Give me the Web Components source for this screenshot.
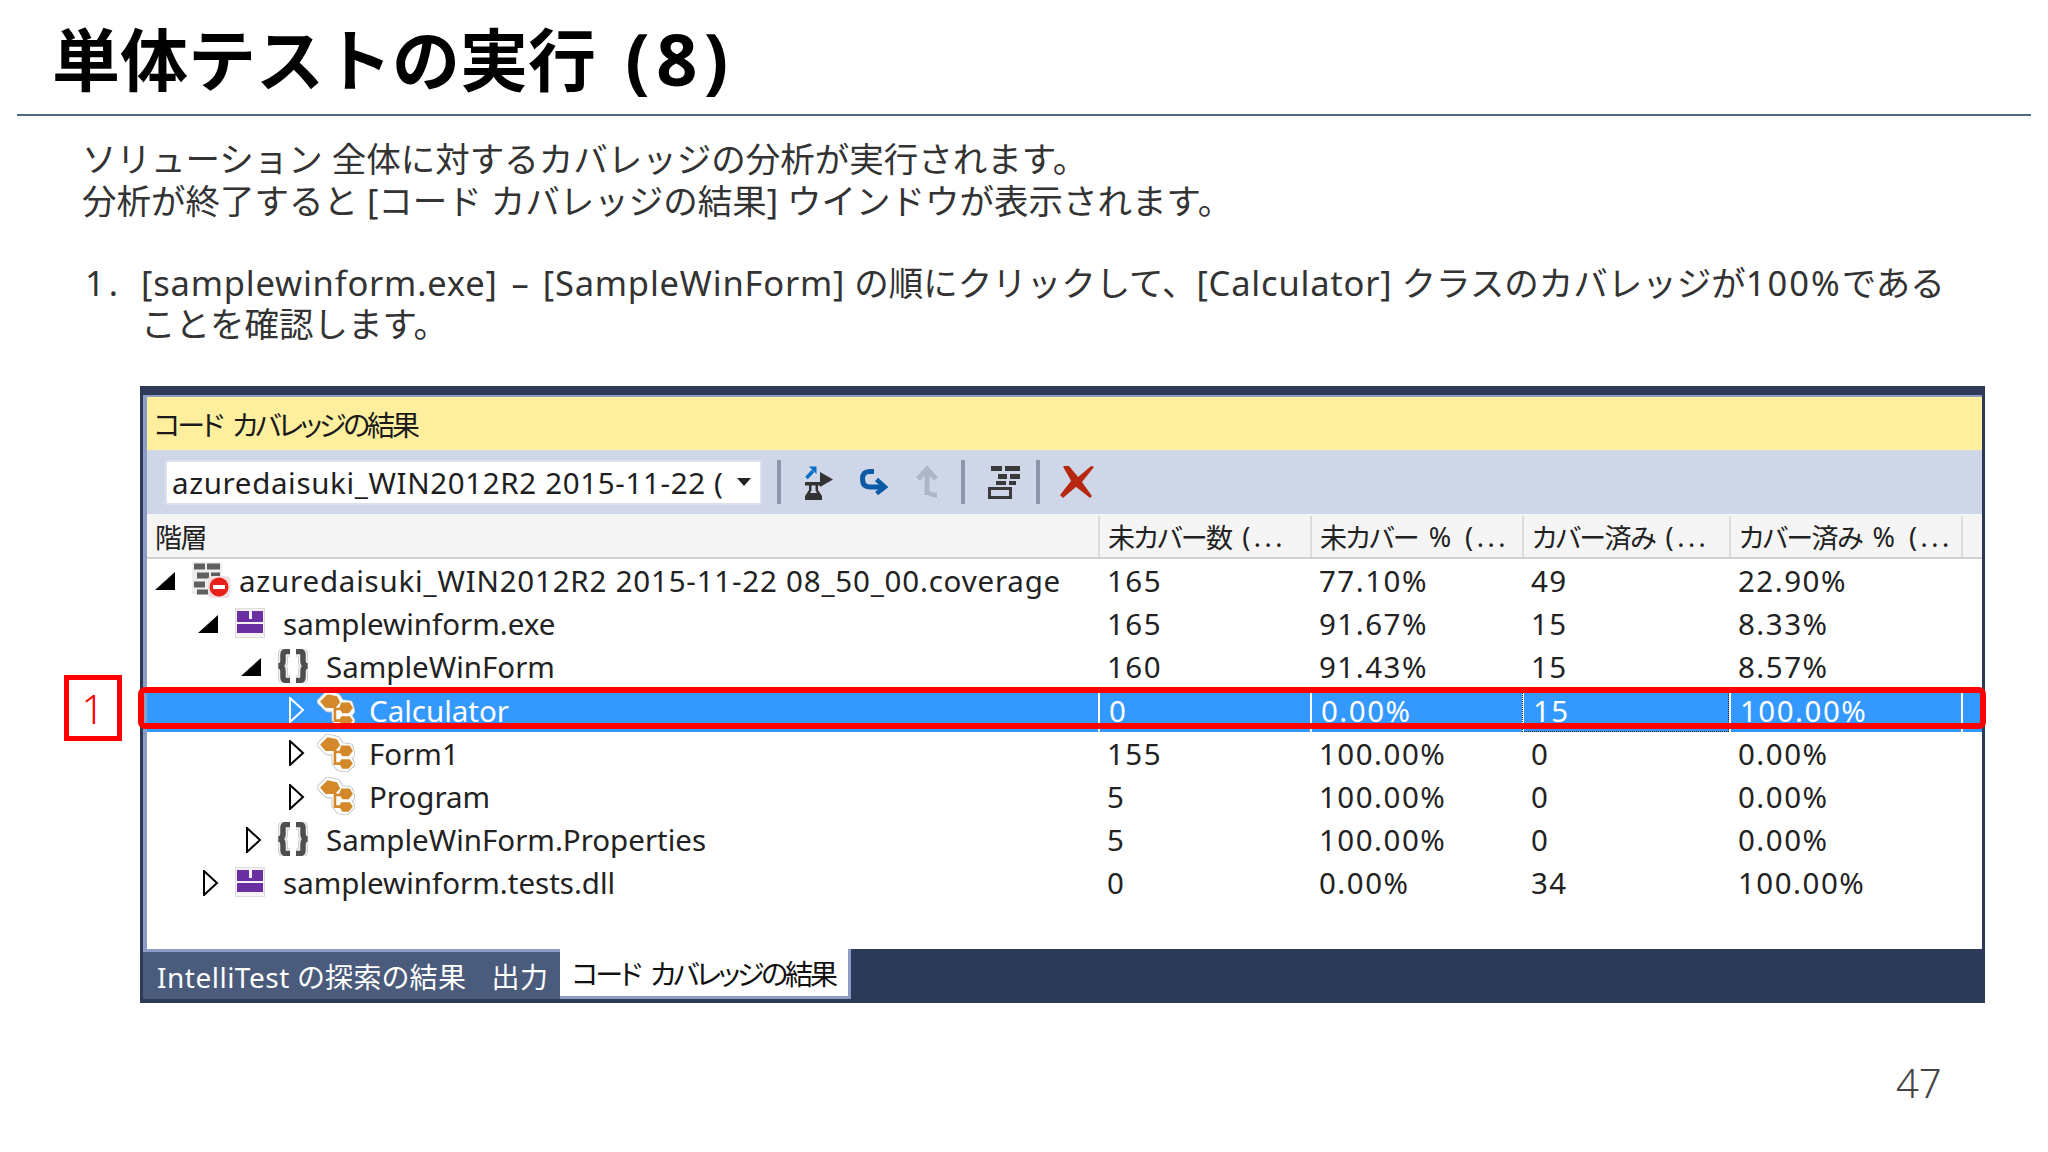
<!DOCTYPE html>
<html lang="ja"><head><meta charset="utf-8"><style>
html,body{margin:0;background:#fff}
body{width:2048px;height:1152px;overflow:hidden;font-family:"Noto Sans","Noto Sans CJK JP",sans-serif}
.l{letter-spacing:.8px}
.w{letter-spacing:2px}
.d{margin:0 5px}
</style></head><body>
<slide-page>
<slide-title>単体テストの実行<span style="font-size:72px;letter-spacing:6.5px;margin-left:4px"> (8)</span></slide-title>
<slide-text>
<p>ソリューション 全体に対するカバレッジの分析が実行されます。<br>分析が終了すると [コード カバレッジの結果] ウインドウが表示されます。</p>
<num-item n="1."><span class="l">[samplewinform.exe]</span> <span class="d">–</span> <span class="l">[SampleWinForm]</span> の順にクリックして、<span class="l">[Calculator]</span> クラスのカバレッジが<span class="w">100%</span>である<br>ことを確認します。</num-item>
</slide-text>
<coverage-window></coverage-window>
<page-no>47</page-no>
</slide-page>
<script>
const FONT='"Noto Sans","Noto Sans CJK JP",sans-serif';
function def(name,css,html){
  customElements.define(name,class extends HTMLElement{
    connectedCallback(){
      if(this.shadowRoot)return;
      const r=this.attachShadow({mode:'open'});
      r.innerHTML='<style>'+css+'</style>'+(typeof html==='function'?html(this):html);
    }
  });
}
def('slide-page',':host{display:block;width:2048px;height:1152px;position:relative}','<slot></slot>');
def('slide-title',`:host{display:block;margin-left:17px;width:2014px;height:116px;box-sizing:border-box;padding:15px 0 0 35px;border-bottom:2px solid #4d6785;
font:700 68px/86px ${FONT};color:#000}`,'<slot></slot>');
def('slide-text',`:host{display:block;padding:22px 0 0 82px;font:400 34.5px/41.5px ${FONT};color:#333}
::slotted(p){margin:0 0 41px 0}`,'<slot></slot>');
def('num-item',`:host{display:grid;grid-template-columns:59px 1fr;line-height:41px}.n{padding-left:3px;letter-spacing:4px}`,h=>`<div class="n">${h.getAttribute('n')}</div><div><slot></slot></div>`);
const BR="M15 2.5H11Q8 2.5 8 6V12Q8 16 4 17Q8 18 8 22V28Q8 31.5 11 31.5H15M21 2.5H25Q28 2.5 28 6V12Q28 16 32 17Q28 18 28 22V28Q28 31.5 25 31.5H21";
const CL="M3 10L10 3L19 5L23 11L31 12L33 19L30 23L33 28L28 33L21 32L17 27L17 17L10 17Z";
const ICON={
 cover:`<svg width="38" height="36" viewBox="0 0 38 36"><rect x="0" y="0" width="30" height="32" fill="#eee"/><path d="M2 1.5h11v6H2zM15 1.5h13v6H15zM5 10.5h12v6H5zM19 10.5h9v6H19zM2 19.5h11v6H2zM5 27.5h12v5H5z" fill="#5f5f5f"/><rect x="16" y="14" width="22" height="22" rx="4" fill="#f2dede"/><circle cx="27" cy="25" r="9.5" fill="#e8201a"/><rect x="21" y="23" width="12" height="4" fill="#fff"/></svg>`,
 mod:`<svg width="30" height="30" viewBox="0 0 30 30"><rect x=".5" y=".5" width="29" height="29" fill="#f6f3f8" stroke="#ddd"/><path d="M2 3h12v11H2zM17 3h11v11H17zM2 16h26v9H2z" fill="#6a2fa0"/><path d="M14 11h3v3h-3z" fill="#6a2fa0"/></svg>`,
 ns:`<svg width="36" height="34" viewBox="0 0 36 34"><g fill="none"><path d="${BR}" stroke="#c4c4c4" stroke-width="10"/><path d="${BR}" stroke="#f2f2f2" stroke-width="8.5"/><path d="${BR}" stroke="#4e4e4e" stroke-width="5.5"/></g></svg>`,
 cls:`<svg width="38" height="38" viewBox="0 0 36 36"><path d="${CL}" fill="#bbb" stroke="#bbb" stroke-width="6.5" stroke-linejoin="round"/><path d="${CL}" fill="#fff" stroke="#fff" stroke-width="5" stroke-linejoin="round"/><path d="M3 10L10 3L19 5L22 11L17 16L8 16Z" fill="#d3882a"/><path d="M23 11L31 11L34 16L30 21L24 21L21 16Z" fill="#d3882a"/><path d="M23 24L31 24L34 28L30 33L24 33L21 28Z" fill="#d3882a"/><path d="M17 14V28H23M17 17H24" fill="none" stroke="#d3882a" stroke-width="2.5"/></svg>`,
 flask:`<svg width="28" height="35" viewBox="0 0 28 35"><path d="M1.5 13L8 6" stroke="#0a6fc2" stroke-width="3.5" fill="none"/><path d="M4 1.5H11.5V9Z" fill="#0a6fc2"/><path d="M15 7V22L28 14.5Z" fill="#333"/><path d="M0 17H17V20.5H13V25L17 31V35H0V31L4 25V20.5H0Z" fill="#333"/><path d="M6.5 20.5H10.5V25.5L12 28H5L6.5 25.5Z" fill="#cfd6e8"/></svg>`,
 redo:`<svg width="28" height="26" viewBox="0 0 28 26"><path d="M14 2.5H9.5Q2.5 2.5 2.5 10Q2.5 18 10 18H24" fill="none" stroke="#0b5aa5" stroke-width="5"/><path d="M16.5 10.5L25 18L16.5 24.5" fill="none" stroke="#0b5aa5" stroke-width="4.5"/></svg>`,
 up:`<svg width="26" height="34" viewBox="0 0 26 34"><path d="M12 30V5M3 14L12 4L21 14M12 26Q14 30 22 30" fill="none" stroke="#aeb6c6" stroke-width="5"/></svg>`,
 stack:`<svg width="34" height="34" viewBox="0 0 34 34"><path d="M3 1H14V6H3zM17 1H32V6H17zM10 9H19V14H10zM22 9H32V14H22zM8 16H18V20H8zM21 16H28V20H21z" fill="#3a3a3a"/><rect x="1.5" y="23.5" width="21" height="9" fill="none" stroke="#3a3a3a" stroke-width="3"/></svg>`,
 x:`<svg width="34" height="32" viewBox="0 0 34 32"><path d="M4 1L8 0L18 12L31 1L33 1L21 16L31 30L30 31L16 20L3 31L1 29L12 15Z" fill="#b5280f" stroke="#b5280f" stroke-width="1.5" stroke-linejoin="round"/></svg>`
};
def('tool-sep',':host{display:block;width:4px;height:44px;background:#8c95a9}','');
const S=t=>`<span style="letter-spacing:3.5px;white-space:pre"> ${t}</span>`;
def('coverage-window',`:host{display:block;position:relative;margin:42px 0 0 140px;width:1845px;height:617px;box-sizing:border-box;background:#2c3a58;padding-top:9px;padding-left:3px;padding-right:3px;font-family:${FONT}}
.frame{display:flex;flex-direction:column;height:100%;box-sizing:border-box}
.top{border-top:2px solid #8d9cc4;border-left:4px solid #8d9cc4;flex:1;display:flex;flex-direction:column;background:#fff;min-height:0}
.cap{height:53px;flex:none;background:#fdef9d;display:flex;align-items:center;padding-left:7px;font-size:28px;color:#1a1a1a;letter-spacing:-3.1px;word-spacing:7px;font-feature-settings:"palt"}
.bar{height:64px;flex:none;background:#cfd6e8;display:flex;align-items:center;padding-left:18px;box-sizing:border-box}
.combo{width:597px;height:45px;box-sizing:border-box;background:#fff;border:2px solid #dbe0ec;display:flex;align-items:center;padding-left:5px;font-size:29.5px;letter-spacing:.65px;color:#1e1e1e;white-space:nowrap}
.combo span{flex:1}
.combo i{display:block;width:0;height:0;border:7px solid transparent;border-top:8px solid #222;border-bottom:0;margin:0 9px 0 0}
.tools{display:flex;align-items:center;margin-left:15px}
.tools span{display:flex}
.head{height:45px;padding-top:2px;flex:none;box-sizing:border-box;background:#f5f5f5;border-bottom:2px solid #d0d0d0;display:grid;grid-template-columns:951px 212px 212px 207px 232px 1fr;font-size:27px;color:#222;letter-spacing:-1.5px;font-feature-settings:"palt"}
.head div{display:flex;align-items:center;padding-left:8px;border-left:2px solid #dcdcdc;box-sizing:border-box;white-space:nowrap}
.head div:first-child{border-left:0}
.rows{flex:1;min-height:0}
.tabs{height:54px;display:flex;flex:none;box-sizing:border-box;color:#fff;font-size:28px;letter-spacing:.5px;font-feature-settings:"palt"}
.tabs .idle{width:417px;box-sizing:border-box;background:#4a5b7c;border-top:3px solid #8d9cc4;margin-bottom:4px;display:flex;gap:25px;align-items:center;padding-left:14px;white-space:nowrap}
.tabs .on{width:291px;box-sizing:border-box;background:#fff;color:#111;border-bottom:3px solid #8d9cc4;margin-bottom:4px;border-right:3px solid #8d9cc4;display:flex;align-items:center;padding-left:12px;letter-spacing:-3.1px;word-spacing:7px;white-space:nowrap}
.hl{position:absolute;left:-2px;top:301px;width:1848px;height:42px;box-sizing:border-box;border:6px solid #f00;border-radius:7px;pointer-events:none}
.mark{position:absolute;left:-76px;top:289px;width:58px;height:66px;box-sizing:border-box;border:5px solid #f00;color:#f00;font-size:40px;font-weight:300;display:flex;align-items:center;justify-content:center}`,
`<div class="frame"><div class="top">
<div class="cap">コード カバレッジの結果</div>
<div class="bar"><div class="combo"><span>azuredaisuki_WIN2012R2 2015-11-22 (</span><i></i></div>
<div class="tools"><tool-sep></tool-sep><span style="margin:0 27px 0 24px">${ICON.flask}</span><span style="margin-right:27px">${ICON.redo}</span><span style="margin-right:20px">${ICON.up}</span><tool-sep></tool-sep><span style="margin:0 14px 0 23px">${ICON.stack}</span><tool-sep></tool-sep><span style="margin-left:20px">${ICON.x}</span></div></div>
<div class="head"><div>階層</div><div>未カバー数${S('(...')}</div><div>未カバー${S('% (...')}</div><div>カバー済み${S('(...')}</div><div>カバー済み${S('% (...')}</div><div></div></div>
<div class="rows">
<tree-row level="0" state="open" icon="cover" ls=".8" name="azuredaisuki_WIN2012R2 2015-11-22 08_50_00.coverage" a="165" b="77.10%" c="49" d="22.90%"></tree-row>
<tree-row level="1" state="open" icon="mod" name="samplewinform.exe" a="165" b="91.67%" c="15" d="8.33%"></tree-row>
<tree-row level="2" state="open" icon="ns" name="SampleWinForm" a="160" b="91.43%" c="15" d="8.57%"></tree-row>
<tree-row level="3" state="closed" icon="cls" name="Calculator" a="0" b="0.00%" c="15" d="100.00%" selected></tree-row>
<tree-row level="3" state="closed" icon="cls" name="Form1" a="155" b="100.00%" c="0" d="0.00%"></tree-row>
<tree-row level="3" state="closed" icon="cls" name="Program" a="5" b="100.00%" c="0" d="0.00%"></tree-row>
<tree-row level="2" state="closed" icon="ns" name="SampleWinForm.Properties" a="5" b="100.00%" c="0" d="0.00%"></tree-row>
<tree-row level="1" state="closed" icon="mod" name="samplewinform.tests.dll" a="0" b="0.00%" c="34" d="100.00%"></tree-row>
</div></div>
<div class="tabs"><div class="idle"><span>IntelliTest の探索の結果</span><span>出力</span></div><div class="on">コード カバレッジの結果</div></div>
</div>
<div class="hl"></div><div class="mark">1</div>`);
customElements.define('tree-row',class extends HTMLElement{
 connectedCallback(){
  if(this.shadowRoot)return;
  const r=this.attachShadow({mode:'open'});
  const g=n=>this.getAttribute(n);
  const lv=+g('level'),open=g('state')==='open',sel=this.hasAttribute('selected');
  r.innerHTML=`<style>
:host{display:grid;grid-template-columns:951px 212px 212px 207px 232px 1fr;height:43.2px;font:400 29.5px/43.2px ${FONT};color:${sel?'#fff':'#222'};background:${sel?'#3399ff':'transparent'}}
.n{display:flex;align-items:center;white-space:nowrap;padding-left:${lv*43+6}px;box-sizing:border-box}
.tw{width:26px;height:26px;flex:none;display:flex;margin-right:${lv===0?10:6}px}
.ic{flex:none;width:44px;display:flex;justify-content:center;margin-right:${lv===0?6:11}px;margin-top:-1px}
.t{letter-spacing:${g('ls')||0}px}
.c{padding-left:9px;box-sizing:border-box;letter-spacing:1.5px;${sel?'border-left:2px solid #fff;':''}}
.f{${sel?'outline:1px dotted #223;outline-offset:-1px;':''}}
</style>
<div class="n"><span class="tw">${open
 ?`<svg width="26" height="26" viewBox="0 0 26 26"><path d="M22 4V22H2Z" fill="#000"/></svg>`
 :`<svg width="26" height="26" viewBox="0 0 26 26"><path d="M8 1L21 13L8 25Z" fill="none" stroke="${sel?'#fff':'#000'}" stroke-width="2"/></svg>`}</span>
<span class="ic">${ICON[g('icon')]}</span><span class="t">${g('name')}</span></div>
<div class="c">${g('a')}</div><div class="c">${g('b')}</div><div class="c f">${g('c')}</div><div class="c">${g('d')}</div><div class="c"></div>`;
 }
});
def('page-no',`:host{display:block;position:absolute;left:1896px;top:1056px;font:300 40px/54px ${FONT};color:#444}`,'<slot></slot>');
</script>
</body></html>
